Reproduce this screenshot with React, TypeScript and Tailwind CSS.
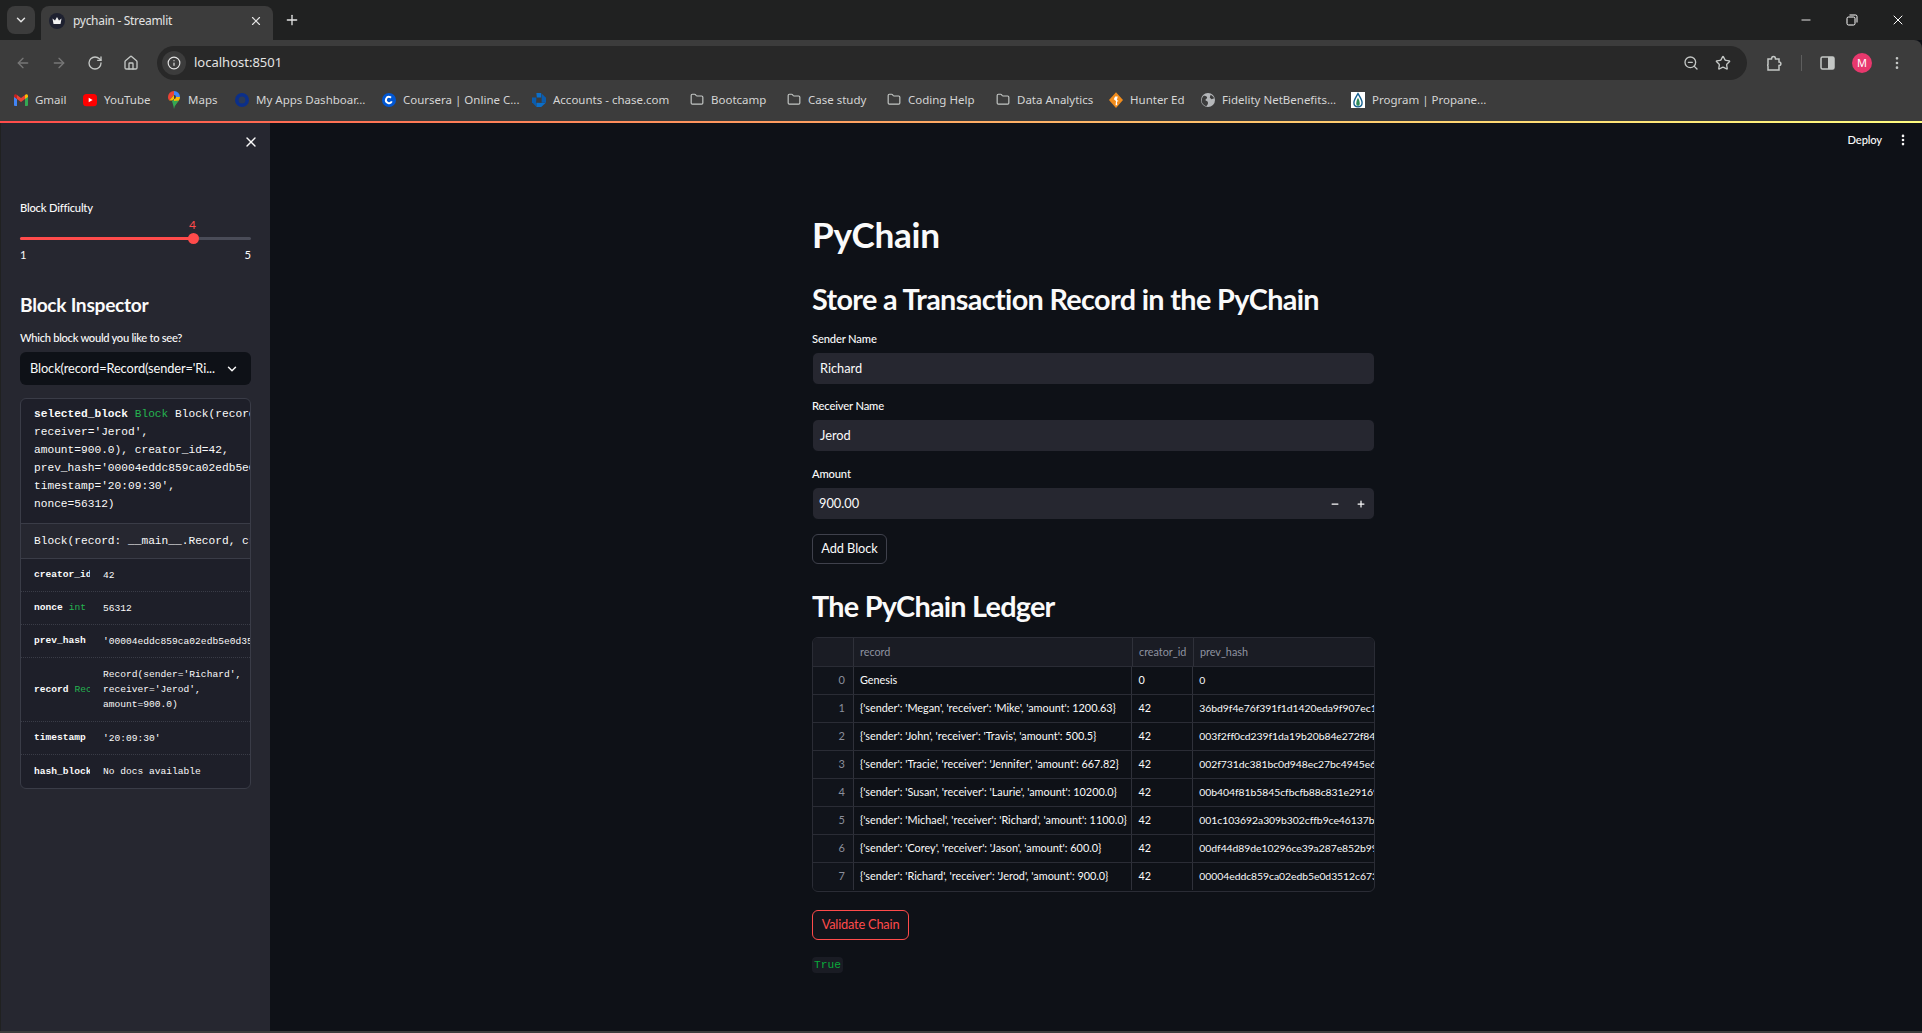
import React from "react";
import {
  ArrowLeft,
  ArrowRight,
  ChevronDown,
  Folder,
  Home,
  Info,
  Minus,
  MoreVertical,
  Plus,
  RotateCw,
  Star,
  X,
  ZoomOut,
} from "lucide-react";

const sans = "font-['Source_Sans_Pro','Lato','Noto_Sans',sans-serif]";
const mono = "font-['Liberation_Mono','DejaVu_Sans_Mono',monospace]";

function Crown() {
  return (
    <svg width="16" height="16" viewBox="0 0 16 16">
      <circle cx="8" cy="8" r="8" fill="#1e2130" />
      <path d="M3.500 5.500 L6 7.500 L8 4 L10 7.500 L12.500 5.500 L11.500 11 H4.500 Z" fill="#f2f2f2" />
    </svg>
  );
}

function GmailIcon() {
  return (
    <svg width="14" height="12" viewBox="0 0 14 12">
      <path d="M0 2v9a1 1 0 0 0 1 1h2V5z" fill="#4285f4" />
      <path d="M14 2v9a1 1 0 0 1-1 1h-2V5z" fill="#34a853" />
      <path d="M3 5 7 8l4-3V1L7 4 3 1z" fill="#ea4335" />
      <path d="M0 2c0-2 2-2.500 3-1v4L0 3z" fill="#c5221f" />
      <path d="M14 2c0-2-2-2.500-3-1v4l3-2z" fill="#fbbc04" />
    </svg>
  );
}

function YoutubeIcon() {
  return (
    <svg width="16" height="16" viewBox="0 0 16 16">
      <rect x="0" y="1" width="16" height="14" rx="4" fill="#f00" />
      <path d="M6.500 5.500 11 8l-4.500 2.500z" fill="#fff" />
    </svg>
  );
}

function MapsIcon() {
  return (
    <svg width="12" height="18" viewBox="0 0 12 18">
      <path d="M6 0a6 6 0 0 0-6 6c0 1.500.5 2.500 1.200 3.500L6 4z" fill="#ea4335" />
      <path d="M6 0a6 6 0 0 1 6 6H8a2 2 0 0 0-2-2z" fill="#4285f4" />
      <path d="M12 6c0 1.500-.5 2.500-1.200 3.500L6 15V8a2 2 0 0 0 2-2z" fill="#fbbc04" />
      <path d="M1.200 9.500 6 4v4l-1.500 1.500z" fill="#fbbc04" />
      <path d="M4 10.500 6 8v10c-.5-3-1.200-5.500-2-7.500z" fill="#34a853" />
      <path d="M10.800 9.500C9 12 6.500 14.500 6 18v-8z" fill="#34a853" />
    </svg>
  );
}

function RingIcon() {
  return (
    <svg width="16" height="16" viewBox="0 0 16 16">
      <circle cx="8" cy="8" r="6" fill="#2b3a55" stroke="#0b2f8a" strokeWidth="4" />
    </svg>
  );
}

function CourseraIcon() {
  return (
    <svg width="16" height="16" viewBox="0 0 16 16">
      <circle cx="8" cy="8" r="8" fill="#0056d2" />
      <circle cx="8" cy="8" r="3.500" fill="none" stroke="#fff" strokeWidth="2.200" strokeDasharray="17 5" transform="rotate(25 8 8)" />
    </svg>
  );
}

function ChaseIcon() {
  return (
    <svg width="16" height="16" viewBox="0 0 16 16">
      <path d="M5 0h5.500v5H5.500L5 0z" fill="#0b6ec9" />
      <path d="M11 .5 16 5.500V11h-5z" fill="#0b5cad" />
      <path d="M15.500 11.500 10.500 16H5v-5z" fill="#0b6ec9" />
      <path d="M4.500 15.500 0 10.500V5h5z" fill="#0b5cad" />
    </svg>
  );
}

function HunterIcon() {
  return (
    <svg width="16" height="18" viewBox="0 0 16 18">
      <path d="M8 0 16 9 8 18 0 9z" fill="#f08c1d" />
      <path d="M7 5h3L9 9l2 1-2 1 .5 4H7.500L8 10 5.500 8z" fill="#fff" />
    </svg>
  );
}

function GlobeIcon() {
  return (
    <svg width="16" height="16" viewBox="0 0 16 16">
      <circle cx="8" cy="8" r="8" fill="#b5b7ba" />
      <path d="M3 3c2 0 4 .5 4 2S5 7 5 8s3 1 3 3-1 3-2 4C3 14 0 11 1 7c.5-2 1-3 2-4z" fill="#3c3c3c" />
      <path d="M11 2c2 1 3 2 4 4l-3 1-2-2z" fill="#3c3c3c" />
    </svg>
  );
}

function ProgramIcon() {
  return (
    <svg width="12" height="14" viewBox="0 0 12 14" className="h-[16px] w-[16px]" preserveAspectRatio="none">
      <rect width="12" height="14" fill="#fff" />
      <path d="M6 1.500C4 5 2.500 7 2.500 9.500S4 13 6 13s3.500-1 3.500-3.500S8 5 6 1.500z" fill="none" stroke="#16608f" strokeWidth="1.200" />
      <path d="M6 5C5 7 4.500 8.500 4.500 10S5.200 12 6 12s1.500-.5 1.500-2S7 7 6 5z" fill="#2e8b57" />
    </svg>
  );
}

function FolderIcon() {
  return <Folder size={15} strokeWidth={2} color="#c4c7c5" />;
}

const bookmarks: { label: string; icon: React.ReactNode; width: string }[] = [
  { label: "Gmail", icon: <GmailIcon />, width: "w-[69px]" },
  { label: "YouTube", icon: <YoutubeIcon />, width: "w-[84px]" },
  { label: "Maps", icon: <MapsIcon />, width: "w-[68px]" },
  { label: "My Apps Dashboar...", icon: <RingIcon />, width: "w-[147px]" },
  { label: "Coursera | Online C...", icon: <CourseraIcon />, width: "w-[150px]" },
  { label: "Accounts - chase.com", icon: <ChaseIcon />, width: "w-[158px]" },
  { label: "Bootcamp", icon: <FolderIcon />, width: "w-[97px]" },
  { label: "Case study", icon: <FolderIcon />, width: "w-[100px]" },
  { label: "Coding Help", icon: <FolderIcon />, width: "w-[109px]" },
  { label: "Data Analytics", icon: <FolderIcon />, width: "w-[113px]" },
  { label: "Hunter Ed", icon: <HunterIcon />, width: "w-[92px]" },
  { label: "Fidelity NetBenefits...", icon: <GlobeIcon />, width: "w-[150px]" },
  { label: "Program | Propane...", icon: <ProgramIcon />, width: "w-[120px]" },
];

const ledger = [
  { id: 0, record: "Genesis", creator: "0", hash: "0" },
  { id: 1, record: "{'sender': 'Megan', 'receiver': 'Mike', 'amount': 1200.63}", creator: "42", hash: "36bd9f4e76f391f1d1420eda9f907ec19a1b2c" },
  { id: 2, record: "{'sender': 'John', 'receiver': 'Travis', 'amount': 500.5}", creator: "42", hash: "003f2ff0cd239f1da19b20b84e272f84c9a1b2" },
  { id: 3, record: "{'sender': 'Tracie', 'receiver': 'Jennifer', 'amount': 667.82}", creator: "42", hash: "002f731dc381bc0d948ec27bc4945e68a1b2c3" },
  { id: 4, record: "{'sender': 'Susan', 'receiver': 'Laurie', 'amount': 10200.0}", creator: "42", hash: "00b404f81b5845cfbcfb88c831e29169a1b2c3" },
  { id: 5, record: "{'sender': 'Michael', 'receiver': 'Richard', 'amount': 1100.0}", creator: "42", hash: "001c103692a309b302cffb9ce46137bca1b2c3" },
  { id: 6, record: "{'sender': 'Corey', 'receiver': 'Jason', 'amount': 600.0}", creator: "42", hash: "00df44d89de10296ce39a287e852b992a1b2c3" },
  { id: 7, record: "{'sender': 'Richard', 'receiver': 'Jerod', 'amount': 900.0}", creator: "42", hash: "00004eddc859ca02edb5e0d3512c6731a1b2c3" },
];

const inspectRows = [
  { name: "creator_id", type: "", value: ["42"], h: "h-[33px]" },
  { name: "nonce", type: "int", value: ["56312"], h: "h-[33px]" },
  { name: "prev_hash", type: "", value: ["'00004eddc859ca02edb5e0d3512c6731a'"], h: "h-[33px]" },
  { name: "record", type: "Record", value: ["Record(sender='Richard',", "receiver='Jerod',", "amount=900.0)"], h: "h-[64px]" },
  { name: "timestamp", type: "", value: ["'20:09:30'"], h: "h-[33px]" },
  { name: "hash_block", type: "", value: ["No docs available"], h: "h-[33px]" },
];

function TabStrip() {
  return (
    <div className="flex h-[40px] shrink-0 items-end bg-[#202121] pl-[7px] text-[#e3e3e3]">
      <div className="mb-[6px] flex h-[28px] w-[28px] items-center justify-center rounded-lg bg-[#3c3c3c]">
        <ChevronDown size={14} strokeWidth={2.500} />
      </div>
      <div className="ml-[6px] flex h-[34px] w-[232px] items-center rounded-t-lg bg-[#3c3c3c] pb-[5px] pl-[8px] pr-[10px]">
        <Crown />
        <span className="ml-[8px] flex-1 text-[12px] tracking-[-0.3px] font-['Noto_Sans',sans-serif]">pychain - Streamlit</span>
        <X size={14} />
      </div>
      <div className="mb-[12px] ml-[11px] flex h-[16px] w-[16px] items-center justify-center">
        <Plus size={16} strokeWidth={2} />
      </div>
      <div className="mb-[12px] ml-auto mr-[16px] flex h-[16px] w-[107px] items-center justify-between text-white">
        <Minus size={14} strokeWidth={1.500} />
        <svg width="12" height="12" viewBox="0 0 12 12" fill="none" stroke="currentColor" strokeWidth="1">
          <rect x="1" y="3" width="8" height="8" rx="1.500" />
          <path d="M3.500 1H9.500A1.500 1.500 0 0 1 11 2.500V8.500" />
        </svg>
        <X size={16} strokeWidth={1.500} />
      </div>
    </div>
  );
}

function Toolbar() {
  return (
    <div className="flex h-[40px] shrink-0 items-end rounded-tr-lg bg-[#3c3c3c] pl-[15px] text-[#c4c7c5]">
      <div className="flex h-[34px] w-[142px] items-center gap-[20px]">
        <ArrowLeft size={16} color="#777" />
        <ArrowRight size={16} color="#777" />
        <RotateCw size={16} />
        <Home size={16} />
      </div>
      <div className="flex h-[34px] w-[1590px] items-center rounded-full bg-[#282828] pl-[5px] pr-[16px]">
        <div className="flex h-[24px] w-[24px] items-center justify-center rounded-full bg-[#3c3c3c]">
          <Info size={14} color="#e3e3e3" />
        </div>
        <span className="ml-[8px] flex-1 text-[13px] text-[#e3e3e3] font-['Noto_Sans',sans-serif]">localhost:8501</span>
        <ZoomOut size={16} />
        <Star size={16} className="ml-[16px]" />
      </div>
      <div className="flex h-[34px] flex-1 items-center pl-[20px]">
        <svg width="16" height="16" viewBox="0 0 16 16" fill="none" stroke="currentColor" strokeWidth="1.500">
          <path d="M1 4h3.500c0-3.500 4-3.500 4 0H12v3c2.500 0 2.500 3.500 0 3.500V15H1v-3.500c0-1-1-1 0-2z" />
        </svg>
        <div className="ml-[18px] h-[16px] w-[1px] bg-[#5e5e5e]" />
        <svg width="15" height="14" viewBox="0 0 15 14" className="ml-[18px]">
          <rect x="1" y="1" width="13" height="12" rx="1.500" fill="none" stroke="currentColor" strokeWidth="1.500" />
          <rect x="8" y="1" width="6" height="12" fill="currentColor" />
        </svg>
        <div className="ml-[17px] flex h-[20px] w-[20px] items-center justify-center rounded-full bg-[#e8386d] text-[11px] text-white font-['Noto_Sans',sans-serif]">
          M
        </div>
        <MoreVertical size={16} className="ml-[17px]" />
      </div>
    </div>
  );
}

function BookmarksBar() {
  return (
    <div className="flex h-[41px] shrink-0 items-center bg-[#3c3c3c] pb-[2px] pl-[14px] text-[11.5px] text-[#d5d5d5] font-['Noto_Sans',sans-serif]">
      {bookmarks.map((b) => (
        <div key={b.label} className={`flex items-center gap-[7px] ${b.width}`}>
          <span className="flex w-[14px] shrink-0 items-center justify-center">{b.icon}</span>
          <span className="whitespace-nowrap">{b.label}</span>
        </div>
      ))}
    </div>
  );
}

function Sidebar() {
  return (
    <aside className={`h-full w-[270px] shrink-0 overflow-hidden border-l border-[#202121] bg-[#262730] pl-[19px] pr-[19px] text-[#fafafa] ${sans}`}>
      <div className="-mr-[8px] flex h-[27px] items-end justify-end">
        <X size={16} strokeWidth={2} />
      </div>
      <div className="mt-[51px] h-[14px] text-[11.2px] font-medium leading-[14px] tracking-[-0.2px]">Block Difficulty</div>
      <div className="relative mt-[3px] h-[14px] text-center text-[12px] leading-[14px]">
        <span className="absolute left-[169px] top-0 text-[#ff4b4b]">4</span>
      </div>
      <div className="relative mt-[5px] flex h-[3px] items-center rounded-full bg-[#4a4c58]">
        <div className="h-[3px] w-[173px] rounded-full bg-[#ff4b4b]" />
        <div className="absolute left-[168px] h-[11px] w-[11px] rounded-full bg-[#ff4b4b]" />
      </div>
      <div className="mt-[9px] flex h-[12px] justify-between text-[11.2px] leading-[12px]">
        <span>1</span>
        <span>5</span>
      </div>
      <div className="mt-[31px] h-[26px] text-[19.2px] font-bold leading-[26px] tracking-[-0.3px]">Block Inspector</div>
      <div className="mt-[13px] h-[14px] text-[11.2px] font-medium leading-[14px] tracking-[-0.3px]">Which block would you like to see?</div>
      <div className="mt-[7px] flex h-[33px] items-center justify-between rounded-md bg-[#0e1117] pl-[10px] pr-[12px] text-[12.8px] tracking-[-0.1px]">
        <span>Block(record=Record(sender='Ri...</span>
        <ChevronDown size={14} strokeWidth={2.500} />
      </div>
      <div className={`mt-[13px] overflow-hidden rounded-md border border-[#3a3c47] bg-[#1e1f29] ${mono}`}>
        <div className="h-[124px] whitespace-nowrap pl-[13px] pt-[6px] text-[11.2px] leading-[18px]">
          <div>
            <span className="font-bold">selected_block</span> <span className="text-[#25b350]">Block</span> Block(record=Record(sender='Richard',
          </div>
          <div>receiver='Jerod',</div>
          <div>amount=900.0), creator_id=42,</div>
          <div>prev_hash='00004eddc859ca02edb5e0d3512c6731a',</div>
          <div>timestamp='20:09:30',</div>
          <div>nonce=56312)</div>
        </div>
        <div className="flex h-[36px] items-center whitespace-nowrap border-y border-[#3a3c47] bg-[#262730] pl-[13px] text-[11.2px]">
          Block(record: __main__.Record, creator_id: int)
        </div>
        {inspectRows.map((r, i) => (
          <div
            key={r.name}
            className={`flex items-center text-[9.6px] leading-[15px] ${r.h} ${i < inspectRows.length - 1 ? "border-b border-dotted border-[#3a3c47]" : ""}`}
          >
            <div className="ml-[13px] w-[56px] shrink-0 overflow-hidden whitespace-nowrap pb-[1px]">
              <span className="font-bold">{r.name}</span>
              {r.type && <span className="ml-[6px] text-[#25b350]">{r.type}</span>}
            </div>
            <div className="ml-[13px] whitespace-nowrap">
              {r.value.map((line) => (
                <div key={line}>{line}</div>
              ))}
            </div>
          </div>
        ))}
      </div>
    </aside>
  );
}

function Field({ label, value, number, spacing }: { label: string; value: string; number?: boolean; spacing: string }) {
  return (
    <div className={`${spacing} h-[53px]`}>
      <div className="h-[14px] text-[11.2px] font-medium leading-[14px] tracking-[-0.15px] text-[#fafafa]">{label}</div>
      <div className={`mt-[6px] flex h-[33px] items-center justify-between rounded-md border border-[#0e1117] bg-[#262730] text-[12.8px] ${number ? "pl-[6px] pr-[4px]" : "pl-[7px]"}`}>
        <span>{value}</span>
        {number && (
          <div className="flex items-center gap-[11px] pr-[2px]">
            <span className="flex w-[15px] justify-center"><Minus size={10} strokeWidth={3} /></span>
            <span className="flex w-[15px] justify-center"><Plus size={10} strokeWidth={3} /></span>
          </div>
        )}
      </div>
    </div>
  );
}

function Ledger() {
  return (
    <div className="mt-[7px] h-[255px] w-[563px] overflow-hidden rounded-md border border-[#2a2c35] text-[10.4px] text-[#fafafa]">
      <div className="flex h-[28px] items-center bg-[#1a1c24] text-[#8f93a0]">
        <div className="h-full w-[41px] border-r border-[#2f313a]" />
        <div className="flex h-full w-[279px] items-center border-r border-[#2f313a] pl-[6px] text-[10.8px]">record</div>
        <div className="flex h-full w-[61px] items-center border-r border-[#2f313a] pl-[6px] text-[10.8px]">creator_id</div>
        <div className="pl-[6px] text-[10.8px]">prev_hash</div>
      </div>
      {ledger.map((row) => (
        <div key={row.id} className="flex h-[28px] items-center border-t border-[#2a2c35]">
          <div className="flex h-full w-[41px] items-center justify-end border-r border-[#2f313a] bg-[#11141b] pr-[8px] text-[11px] text-[#8b8f9b]">{row.id}</div>
          <div className="flex h-full w-[279px] items-center overflow-hidden whitespace-nowrap border-r border-[#2f313a] pl-[6px] text-[10.85px]">{row.record}</div>
          <div className="flex h-full w-[61px] items-center border-r border-[#2f313a] pl-[6px] text-[10.8px]">{row.creator}</div>
          <div className="w-[181px] overflow-hidden whitespace-nowrap pl-[6px] tracking-[-0.05px]">{row.hash}</div>
        </div>
      ))}
    </div>
  );
}

export default function App() {
  return (
    <div className="flex h-screen w-full flex-col overflow-hidden bg-[#0e1117]">
      <TabStrip />
      <Toolbar />
      <BookmarksBar />
      <div className="h-[2px] shrink-0 bg-gradient-to-r from-[#ff4b4b] to-[#fffd80]" />
      <div className="flex min-h-0 flex-1">
        <Sidebar />
        <main className={`relative flex-1 pl-[542px] text-[#fafafa] ${sans}`}>
          <div className="absolute right-[12px] top-[9px] flex items-center gap-[14px] text-[11.2px] font-medium tracking-[-0.15px]">
            <span>Deploy</span>
            <MoreVertical size={14} strokeWidth={2.500} />
          </div>
          <h1 className="mt-[86px] h-[50px] text-[35.2px] font-bold leading-[50px] tracking-[-0.35px]">PyChain</h1>
          <h2 className="mt-[16px] h-[48px] text-[28.8px] font-bold leading-[48px] tracking-[-0.65px]">Store a Transaction Record in the PyChain</h2>
          <div className="w-[563px]">
            <Field label="Sender Name" value="Richard" spacing="mt-[9px]" />
            <Field label="Receiver Name" value="Jerod" spacing="mt-[14px]" />
            <Field label="Amount" value="900.00" number spacing="mt-[15px]" />
          </div>
          <button className="mt-[14px] flex h-[30px] w-[75px] items-center justify-center rounded-md border border-[#3f414c] text-[12.8px] tracking-[-0.1px]">
            Add Block
          </button>
          <h2 className="mt-[18px] h-[48px] text-[28.8px] font-bold leading-[48px] tracking-[-0.75px]">The PyChain Ledger</h2>
          <Ledger />
          <button className="mt-[18px] flex h-[30px] w-[97px] items-center justify-center rounded-md border border-[#ff4b4b] bg-[#11141b] text-[12.8px] tracking-[-0.2px] text-[#ff4b4b]">
            Validate Chain
          </button>
          <div className={`mt-[17px] flex h-[16px] w-[31px] items-center justify-center rounded-sm bg-[#1a1c24] text-[11.2px] text-[#09ab3b] ${mono}`}>
            True
          </div>
        </main>
      </div>
      <div className="h-[2px] shrink-0 bg-[#3c3c3c]" />
    </div>
  );
}
